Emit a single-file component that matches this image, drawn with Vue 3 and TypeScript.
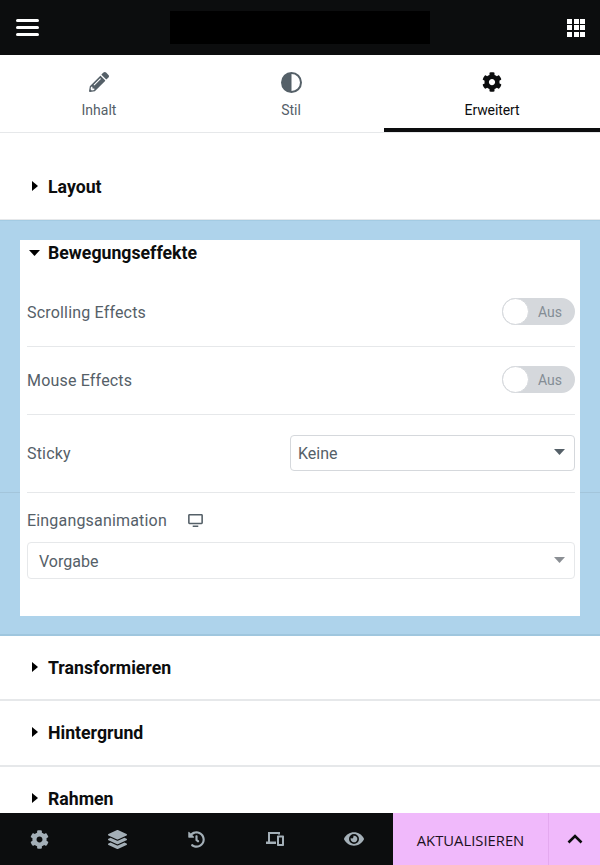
<script setup lang="ts">
interface FooterIcon {
  name: string
  box: string
  path: string
}

const cog =
  'M487.4 315.7l-42.6-24.6c4.3-23.2 4.3-47 0-70.2l42.6-24.6c4.9-2.8 7.1-8.6 5.5-14-11.1-35.6-30-67.8-54.7-94.6-3.8-4.1-10-5.1-14.8-2.3L380.8 110c-17.9-15.4-38.5-27.3-60.8-35.1V25.8c0-5.6-3.9-10.5-9.4-11.7-36.7-8.2-74.3-7.8-109.2 0-5.5 1.2-9.4 6.1-9.4 11.7V75c-22.2 7.9-42.8 19.8-60.8 35.1L88.7 85.5c-4.9-2.8-11-1.9-14.8 2.3-24.7 26.7-43.6 58.9-54.7 94.6-1.7 5.4.6 11.2 5.5 14L67.3 221c-4.3 23.2-4.3 47 0 70.2l-42.6 24.6c-4.9 2.8-7.1 8.6-5.5 14 11.1 35.6 30 67.8 54.7 94.6 3.8 4.1 10 5.1 14.8 2.3l42.6-24.6c17.9 15.4 38.5 27.3 60.8 35.1v49.2c0 5.6 3.9 10.5 9.4 11.7 36.7 8.2 74.3 7.8 109.2 0 5.5-1.2 9.4-6.1 9.4-11.7v-49.2c22.2-7.9 42.8-19.8 60.8-35.1l42.6 24.6c4.9 2.8 11 1.9 14.8-2.3 24.7-26.7 43.6-58.9 54.7-94.6 1.5-5.5-.7-11.3-5.6-14.1zM256 336c-44.1 0-80-35.9-80-80s35.9-80 80-80 80 35.9 80 80-35.9 80-80 80z'

const footerIcons: FooterIcon[] = [
  { name: 'settings', box: '0 0 512 512', path: cog },
  {
    name: 'layers',
    box: '0 0 512 512',
    path: 'M12.41 148.02l232.94 105.67c6.8 3.09 14.49 3.09 21.29 0l232.94-105.67c16.55-7.51 16.55-32.52 0-40.03L266.65 2.31a25.607 25.607 0 0 0-21.29 0L12.41 107.98c-16.55 7.51-16.55 32.53 0 40.04zm487.18 88.28l-58.09-26.33-161.64 73.27c-7.56 3.43-15.59 5.17-23.86 5.17s-16.29-1.74-23.86-5.17L70.51 209.97l-58.1 26.33c-16.55 7.5-16.55 32.5 0 40l232.94 105.59c6.8 3.08 14.49 3.08 21.29 0L499.59 276.3c16.55-7.5 16.55-32.5 0-40zm0 127.8l-57.87-26.23-161.86 73.37c-7.56 3.43-15.59 5.17-23.86 5.17s-16.29-1.74-23.86-5.17L70.29 337.87 12.41 364.1c-16.55 7.5-16.55 32.5 0 40l232.94 105.59c6.8 3.08 14.49 3.08 21.29 0L499.59 404.1c16.55-7.5 16.55-32.5 0-40z'
  },
  {
    name: 'history',
    box: '0 0 512 512',
    path: 'M504 255.531c.253 136.64-111.18 248.372-247.82 248.468-59.015.042-113.223-20.53-155.822-54.911-11.077-8.94-11.905-25.541-1.839-35.607l11.267-11.267c8.609-8.609 22.353-9.551 31.891-1.984C173.062 425.135 212.781 440 256 440c101.705 0 184-82.311 184-184 0-101.705-82.311-184-184-184-48.814 0-93.149 18.969-126.068 49.932l50.754 50.754c10.08 10.08 2.941 27.314-11.313 27.314H24c-8.837 0-16-7.163-16-16V38.627c0-14.254 17.234-21.393 27.314-11.314l49.372 49.372C129.209 31.084 189.552 8 256 8c136.81 0 247.747 110.78 248 247.531zm-180.912 78.784l9.823-12.63c8.138-10.463 6.253-25.542-4.21-33.679L288 256.349V152c0-13.255-10.745-24-24-24h-16c-13.255 0-24 10.745-24 24v135.651l65.409 50.874c10.463 8.137 25.541 6.253 33.679-4.21z'
  },
  {
    name: 'responsive',
    box: '0 0 18 14',
    path: 'M2 0h12v2.500h-2V2H4v7.500h6V12H0V9.500h2zM12 3.500h5c.6 0 1 .4 1 1V13c0 .6-.4 1-1 1h-5c-.6 0-1-.4-1-1V4.500c0-.6.4-1 1-1zm1 2v6.500h3V5.500z'
  },
  {
    name: 'preview',
    box: '0 0 576 512',
    path: 'M572.52 241.4C518.29 135.59 410.93 64 288 64S57.68 135.64 3.48 241.41a32.35 32.35 0 0 0 0 29.19C57.71 376.41 165.07 448 288 448s230.32-71.64 284.52-177.41a32.35 32.35 0 0 0 0-29.19zM288 400a144 144 0 1 1 144-144 143.93 143.93 0 0 1-144 144zm0-240a95.31 95.31 0 0 0-25.31 3.79 47.85 47.85 0 0 1-66.9 66.9A95.78 95.78 0 1 0 288 160z'
  }
]

const gridCells = Array.from({ length: 9 }, (_, i) => i)
const closedSections = ['Transformieren', 'Hintergrund', 'Rahmen']
const toggleRows = ['Scrolling Effects', 'Mouse Effects']
</script>

<template>
  <div class="editor">
    <header class="topbar">
      <button class="menu" aria-label="Menü"><span></span><span></span><span></span></button>
      <div class="title-box"></div>
      <div class="apps"><i v-for="c in gridCells" :key="c"></i></div>
    </header>

    <nav class="tabs">
      <div class="tab tab-content">
        <svg class="tab-icon" viewBox="0 0 512 512" width="20" height="20">
          <path fill="#556068" d="M497.900 142.100l-46.100 46.100c-4.700 4.700-12.300 4.700-17 0l-111-111c-4.700-4.700-4.700-12.300 0-17l46.100-46.100c18.700-18.700 49.100-18.700 67.900 0l60.100 60.100c18.800 18.700 18.800 49.100 0 67.900zM284.200 99.800L21.600 362.400.4 483.900c-2.900 16.400 11.400 30.600 27.800 27.800l121.500-21.300 262.600-262.600c4.700-4.700 4.700-12.300 0-17l-111-111c-4.800-4.700-12.400-4.700-17.100 0zM124.100 339.900c-5.500-5.500-5.500-14.300 0-19.800l154-154c5.500-5.500 14.300-5.500 19.800 0s5.500 14.300 0 19.800l-154 154c-5.500 5.500-14.300 5.500-19.800 0zM88 424h48v36.300l-64.500 11.300-31.100-31.100L51.700 376H88v48z" />
        </svg>
        <span>Inhalt</span>
      </div>
      <div class="tab tab-style">
        <svg class="tab-icon icon-half" viewBox="0 0 21 21" width="21" height="21">
          <circle cx="10.500" cy="10.500" r="9.500" fill="#fff" stroke="#556068" stroke-width="2" />
          <path fill="#556068" d="M10.500 1a9.500 9.500 0 0 0 0 19z" />
        </svg>
        <span>Stil</span>
      </div>
      <div class="tab tab-advanced active">
        <svg class="tab-icon" viewBox="0 0 512 512" width="20" height="20">
          <path fill="#0c0d0e" :d="cog" />
        </svg>
        <span>Erweitert</span>
      </div>
    </nav>

    <main class="panels">
      <section class="section section-first">
        <svg class="caret" viewBox="0 0 6 10" width="6" height="10"><path d="M0 0l6 5-6 5z" /></svg>
        <h3>Layout</h3>
      </section>

      <div class="highlight">
        <div class="overlay-line"></div>
        <div class="panel">
          <div class="panel-title">
            <svg class="caret-open" viewBox="0 0 11 6" width="11" height="6"><path d="M0 0h11L5.500 6z" /></svg>
            <h3>Bewegungseffekte</h3>
          </div>

          <div v-for="label in toggleRows" :key="label" class="row">
            <span class="label">{{ label }}</span>
            <div class="toggle"><span class="knob"></span><span class="off">Aus</span></div>
          </div>

          <div class="row row-sticky">
            <span class="label">Sticky</span>
            <div class="select select-sticky">
              <span>Keine</span>
              <svg viewBox="0 0 11 6" width="11" height="6"><path fill="#556068" d="M0 0h11L5.500 6z" /></svg>
            </div>
          </div>

          <div class="entrance">
            <div class="entrance-label">
              <span class="label">Eingangsanimation</span>
              <svg viewBox="0 0 16 14" width="15" height="13">
                <path fill="#556068" d="M1.500 0h13C15.300 0 16 .7 16 1.500v8c0 .8-.7 1.500-1.500 1.500h-13C.7 11 0 10.300 0 9.500v-8C0 .7.700 0 1.500 0zm.2 1.600v7.800h12.600V1.600zM5 12.500h6V14H5z" />
              </svg>
            </div>
            <div class="select select-entrance">
              <span>Vorgabe</span>
              <svg viewBox="0 0 11 6" width="11" height="6"><path fill="#8b8f94" d="M0 0h11L5.500 6z" /></svg>
            </div>
          </div>
        </div>
      </div>

      <section v-for="name in closedSections" :key="name" class="section">
        <svg class="caret" viewBox="0 0 6 10" width="6" height="10"><path d="M0 0l6 5-6 5z" /></svg>
        <h3>{{ name }}</h3>
      </section>
    </main>

    <footer class="footer">
      <div class="tools">
        <div v-for="icon in footerIcons" :key="icon.name" class="tool">
          <svg :viewBox="icon.box" :class="'ico-' + icon.name"><path fill="#a4afb7" :d="icon.path" /></svg>
        </div>
      </div>
      <div class="publish">AKTUALISIEREN</div>
      <div class="more">
        <svg viewBox="0 0 16 10" width="16" height="10">
          <path d="M1.500 8.500L8 2l6.500 6.500" fill="none" stroke="#0c0d0e" stroke-width="2.600" />
        </svg>
      </div>
    </footer>
  </div>
</template>

<style>
body {
  margin: 0;
  background: #fff;
}
</style>

<style scoped>
.editor {
  width: 600px;
  height: 865px;
  display: flex;
  flex-direction: column;
  overflow: hidden;
  font-family: Roboto, "Liberation Sans", sans-serif;
  color: #556068;
  background: #fff;
}

.topbar {
  flex: 0 0 55px;
  display: flex;
  align-items: center;
  justify-content: space-between;
  padding: 0 15px 0 16px;
  background: #0c0d0e;
}

.menu {
  width: 23px;
  padding: 0;
  border: 0;
  background: none;
  display: flex;
  flex-direction: column;
  gap: 4px;
}

.menu span {
  height: 3px;
  border-radius: 2px;
  background: #fff;
}

.title-box {
  width: 260px;
  height: 33px;
  margin-left: -7px;
  background: #000;
}

.apps {
  width: 18px;
  display: grid;
  grid-template-columns: repeat(3, 5px);
  grid-auto-rows: 5px;
  gap: 1.500px;
}

.apps i {
  background: #fff;
}

.tabs {
  flex: 0 0 78px;
  box-sizing: border-box;
  display: flex;
  border-bottom: 1px solid #e6e8ea;
}

.tab {
  position: relative;
  display: flex;
  flex-direction: column;
  align-items: center;
  padding-top: 17px;
  font-size: 14px;
  line-height: 18px;
}

.tab span {
  margin-top: 9px;
}

.tab-icon {
  display: block;
}

.icon-half {
  margin-bottom: -1px;
}

.tab-content { width: 198px; }
.tab-style { width: 186px; }
.tab-advanced { width: 216px; }

.tab.active {
  color: #0c0d0e;
  height: 77px;
  box-sizing: border-box;
  border-bottom: 4px solid #0c0d0e;
  letter-spacing: -0.1px;
}

.panels {
  flex: 1;
  min-height: 0;
  overflow: hidden;
}

.section {
  box-sizing: border-box;
  height: 66px;
  display: flex;
  align-items: center;
  padding-left: 32px;
  border-bottom: 2px solid #e6e8ea;
}

.section-first {
  margin-top: 21px;
  border-bottom-width: 1px;
}

.highlight + .section {
  height: 65px;
}

h3 {
  margin: 0;
  font-size: 17.700px;
  font-weight: 700;
  line-height: 24px;
  color: #0c0d0e;
}

.caret {
  margin-right: 10px;
  margin-top: -2px;
}

.caret-open {
  margin-right: 8px;
  margin-left: 9px;
}

.highlight {
  position: relative;
  box-sizing: border-box;
  height: 416px;
  padding: 19px 20px 0;
  background: #aed3eb;
  border-top: 1px solid #a3cbe3;
  border-bottom: 2px solid #9fc6de;
}

.overlay-line {
  position: absolute;
  left: 0;
  right: 0;
  top: 271px;
  height: 1px;
  background: rgba(100, 120, 130, 0.15);
}

.panel {
  position: relative;
  height: 376px;
  box-sizing: border-box;
  padding: 0 5px 0 7px;
  background: #fff;
}

.panel-title {
  display: flex;
  align-items: center;
  height: 26px;
  margin-left: -7px;
}

.row {
  box-sizing: border-box;
  height: 68px;
  display: flex;
  align-items: center;
  justify-content: space-between;
  border-bottom: 1px solid #e6e8ea;
}

.panel-title + .row {
  height: 81px;
  padding-top: 13px;
}

.row-sticky {
  height: 78px;
  padding-bottom: 2px;
}

.row-sticky .label {
  padding-top: 2px;
}

.label {
  font-size: 16px;
  letter-spacing: 0.18px;
}

.toggle {
  position: relative;
  box-sizing: border-box;
  width: 73px;
  height: 27px;
  margin-top: -2px;
  display: flex;
  align-items: center;
  justify-content: flex-end;
  padding-right: 13px;
  border-radius: 14px;
  background: #d5d8dc;
}

.knob {
  position: absolute;
  left: 0;
  top: 0;
  box-sizing: border-box;
  width: 27px;
  height: 27px;
  border-radius: 50%;
  background: #fff;
  border: 1px solid #d5d8dc;
}

.off {
  font-size: 14px;
  color: #848d95;
}

.select {
  box-sizing: border-box;
  display: flex;
  align-items: center;
  justify-content: space-between;
  border-radius: 4px;
  font-size: 16px;
  background: #fff;
}

.select span {
  padding-top: 2px;
}

.select svg {
  margin-top: -1px;
}

.select-sticky {
  width: 285px;
  height: 36px;
  padding: 0 9px 0 7px;
  border: 1px solid #d5d8dc;
}

.entrance {
  padding-top: 16px;
}

.entrance-label {
  display: flex;
  align-items: center;
  gap: 21px;
  height: 22px;
}

.select-entrance {
  height: 37px;
  margin-top: 11px;
  padding: 0 9px 0 11px;
  border: 1px solid #e6e8ea;
}

.footer {
  flex: 0 0 52px;
  display: flex;
  background: #0c0d0e;
}

.tools {
  width: 393px;
  display: flex;
}

.tool {
  flex: 1;
  display: flex;
  align-items: center;
  justify-content: center;
}

.tool svg {
  width: 19px;
  height: 19px;
}

.tool .ico-history {
  width: 17px;
  height: 17px;
}

.tool .ico-responsive {
  width: 18px;
  height: 14px;
}

.tool .ico-preview {
  width: 20px;
  height: 18px;
}

.publish {
  width: 156px;
  display: flex;
  align-items: center;
  justify-content: center;
  padding-top: 1px;
  font-family: "Open Sans", sans-serif;
  font-size: 14.800px;
  color: #1b1020;
  background: #f0b9fb;
  border-right: 1px solid #e4a9ef;
  box-sizing: border-box;
}

.more {
  width: 51px;
  display: flex;
  align-items: center;
  justify-content: center;
  background: #f0b9fb;
}
</style>
